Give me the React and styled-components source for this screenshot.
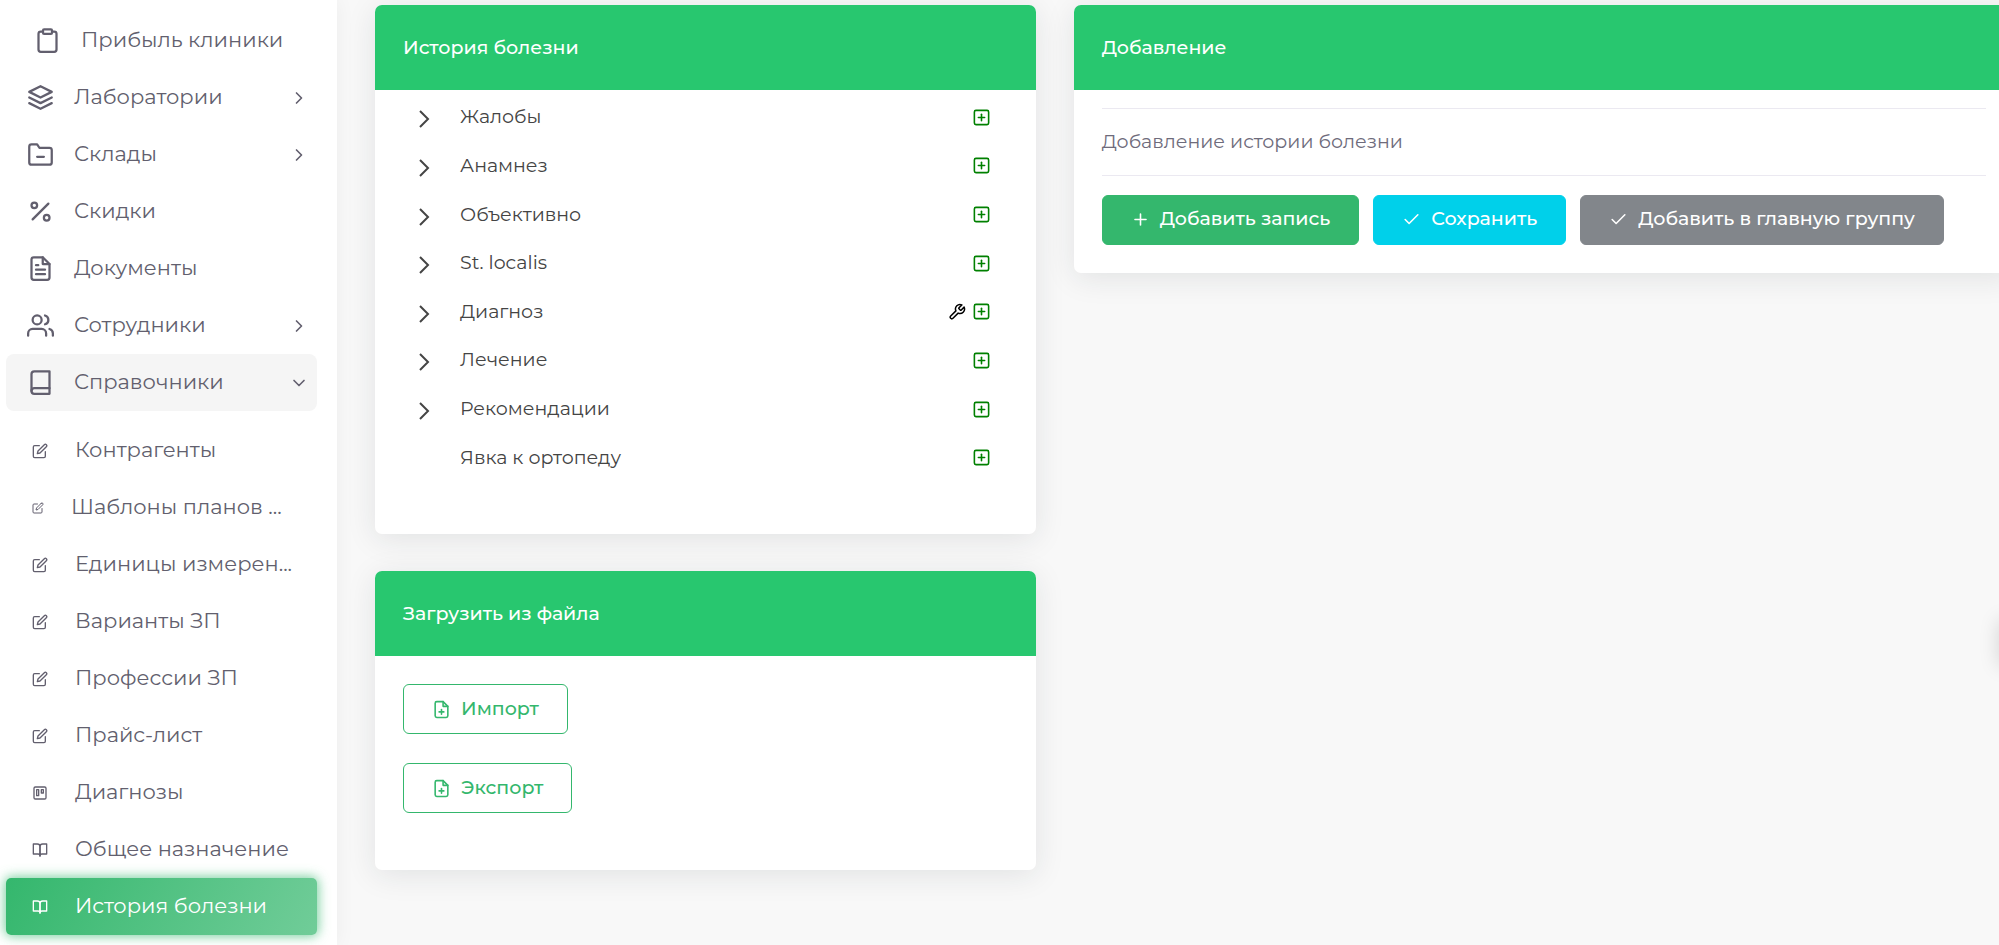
import React from 'react';
import styled, { createGlobalStyle, css } from 'styled-components';
import {
  FiBook,
  FiBookOpen,
  FiCheck,
  FiChevronDown,
  FiChevronRight,
  FiClipboard,
  FiEdit,
  FiFilePlus,
  FiFileText,
  FiFolderMinus,
  FiLayers,
  FiPercent,
  FiPlus,
  FiPlusSquare,
  FiTool,
  FiTrello,
  FiUsers,
} from 'react-icons/fi';

const menu = [
  { title: 'Прибыль клиники', icon: FiClipboard, nested: true },
  { title: 'Лаборатории', icon: FiLayers, arrow: FiChevronRight },
  { title: 'Склады', icon: FiFolderMinus, arrow: FiChevronRight },
  { title: 'Скидки', icon: FiPercent },
  { title: 'Документы', icon: FiFileText },
  { title: 'Сотрудники', icon: FiUsers, arrow: FiChevronRight },
  { title: 'Справочники', icon: FiBook, arrow: FiChevronDown, open: true },
];

const submenu = [
  { title: 'Контрагенты', icon: FiEdit },
  { title: 'Шаблоны планов ...', icon: FiEdit, small: true },
  { title: 'Единицы измерен...', icon: FiEdit },
  { title: 'Варианты ЗП', icon: FiEdit },
  { title: 'Профессии ЗП', icon: FiEdit },
  { title: 'Прайс-лист', icon: FiEdit },
  { title: 'Диагнозы', icon: FiTrello },
  { title: 'Общее назначение', icon: FiBookOpen },
  { title: 'История болезни', icon: FiBookOpen, active: true },
];

const sections = [
  { title: 'Жалобы', children: true },
  { title: 'Анамнез', children: true },
  { title: 'Объективно', children: true },
  { title: 'St. localis', children: true },
  { title: 'Диагноз', children: true, settings: true },
  { title: 'Лечение', children: true },
  { title: 'Рекомендации', children: true },
  { title: 'Явка к ортопеду' },
];

const TreeArrow = () => (
  <svg width="12" height="18" viewBox="0 0 12 18" fill="none" stroke="currentColor" strokeWidth="2">
    <polyline points="2,1 10,9 2,17" />
  </svg>
);

const Sidebar = () => (
  <SidebarStyled>
    <MenuList>
      {menu.map(({ title, icon: Icon, arrow: Arrow, nested, open }) => (
        <li key={title}>
          <MenuLink href="#" $open={open} $nested={nested}>
            <Icon size={27} />
            <MenuTitle>{title}</MenuTitle>
            {Arrow && <Arrow size={20} />}
          </MenuLink>
        </li>
      ))}
    </MenuList>
    <SubmenuList>
      {submenu.map(({ title, icon: Icon, small, active }) => (
        <li key={title}>
          <SubmenuLink href="#" $active={active}>
            <Icon size={small ? 12 : 16} />
            <MenuTitle>{title}</MenuTitle>
          </SubmenuLink>
        </li>
      ))}
    </SubmenuList>
  </SidebarStyled>
);

const App = () => {
  return (
    <Page>
      <GlobalStyle />
      <Sidebar />
      <Content>
        <Row>
          <Column $span={5}>
            <Card>
              <CardHeader>История болезни</CardHeader>
              <Tree>
                {sections.map((section) => (
                  <TreeRow key={section.title}>
                    <TreeToggle>
                      {section.children && (
                        <IconButton aria-label="Развернуть">
                          <TreeArrow />
                        </IconButton>
                      )}
                    </TreeToggle>
                    <TreeTitle>{section.title}</TreeTitle>
                    {section.settings && (
                      <IconButton $color="#000" aria-label="Настроить">
                        <FiTool size={18} />
                      </IconButton>
                    )}
                    <IconButton $color="#008000" aria-label="Добавить">
                      <FiPlusSquare size={19} />
                    </IconButton>
                  </TreeRow>
                ))}
              </Tree>
            </Card>
            <Card>
              <CardHeader>Загрузить из файла</CardHeader>
              <FileActions>
                <OutlineButton>
                  <FiFilePlus size={19} />
                  Импорт
                </OutlineButton>
                <OutlineButton>
                  <FiFilePlus size={19} />
                  Экспорт
                </OutlineButton>
              </FileActions>
            </Card>
          </Column>
          <Column $span={7}>
            <Card>
              <CardHeader>Добавление</CardHeader>
              <FormBody>
                <FormTitle>Добавление истории болезни</FormTitle>
                <Actions>
                  <Button $color="#34b76d">
                    <FiPlus size={19} />
                    Добавить запись
                  </Button>
                  <Button $color="#00d0ea">
                    <FiCheck size={19} />
                    Сохранить
                  </Button>
                  <Button $color="#82868b">
                    <FiCheck size={19} />
                    Добавить в главную группу
                  </Button>
                </Actions>
              </FormBody>
            </Card>
          </Column>
        </Row>
      </Content>
      <Customizer />
    </Page>
  );
};

export default App;

const GlobalStyle = createGlobalStyle`
  * {
    box-sizing: border-box;
  }

  body {
    margin: 0;
    background: #f8f8f8;
    color: #6e6b7b;
    font-family: Montserrat, Inter, 'Open Sans', sans-serif;
    font-size: 19px;
    line-height: 26px;
    overflow: hidden;
  }

  button {
    font: inherit;
    cursor: pointer;
  }
`;

const Page = styled.div`
  display: flex;
  min-height: 100vh;
  overflow: hidden;
`;

const SidebarStyled = styled.nav`
  flex: 0 0 337px;
  padding: 12px 20px 9px 6px;
  background: #fff;
  box-shadow: 0 0 19px rgba(0, 0, 0, 0.05);
`;

const MenuList = styled.ul`
  margin: 0;
  padding: 0;
  list-style: none;
`;

const SubmenuList = styled(MenuList)`
  margin-top: 11px;
`;

const linkStyles = css`
  display: flex;
  align-items: center;
  height: 57px;
  color: #625f6e;
  font-size: 21px;
  text-decoration: none;
  white-space: nowrap;

  svg {
    flex: none;
  }
`;

const MenuLink = styled.a`
  ${linkStyles}
  gap: 20px;
  padding: 0 8px 0 ${({ $nested }) => ($nested ? '28px' : '21px')};
  border-radius: 8px;
  background: ${({ $open }) => ($open ? '#f5f5f5' : 'transparent')};
`;

const SubmenuLink = styled.a`
  ${linkStyles}
  gap: 27px;
  padding: 0 8px 0 26px;
  border-radius: 5px;

  ${({ $active }) =>
    $active &&
    css`
      background: linear-gradient(118deg, #34b76d, rgba(52, 183, 109, 0.7));
      box-shadow: 0 0 12px 1px rgba(52, 183, 109, 0.7);
      color: #fff;
    `}
`;

const MenuTitle = styled.span`
  flex: 1;
  padding-bottom: 2px;
`;

const Content = styled.main`
  flex: 1;
  min-width: 0;
  margin-right: -34px;
  padding: 5px 0 0 19px;
`;

const Row = styled.div`
  display: flex;
  align-items: flex-start;
`;

const Column = styled.div`
  display: flex;
  flex-direction: column;
  gap: 37px;
  width: calc(100% * ${({ $span }) => $span} / 12);
  padding: 0 19px;
`;

const Card = styled.section`
  border-radius: 7px;
  background: #fff;
  box-shadow: 0 5px 30px rgba(34, 41, 47, 0.1);
`;

const CardHeader = styled.h4`
  display: flex;
  align-items: center;
  height: 85px;
  margin: 0;
  padding: 0 28px;
  border-radius: 7px 7px 0 0;
  background: #28c76f;
  color: #fff;
  font-size: 19px;
  font-weight: 500;
`;

const Tree = styled.ul`
  display: grid;
  grid-auto-rows: 1fr;
  height: 444px;
  margin: 0;
  padding: 3px 45px 52px 43px;
  color: #444;
  list-style: none;
`;

const TreeRow = styled.li`
  display: flex;
  align-items: center;
  gap: 6px;
`;

const TreeToggle = styled.span`
  width: 36px;
  padding-top: 4px;
`;

const TreeTitle = styled.span`
  flex: 1;
`;

const IconButton = styled.button`
  display: flex;
  padding: 0;
  border: 0;
  background: none;
  color: ${({ $color }) => $color || 'inherit'};
`;

const FileActions = styled.div`
  display: flex;
  flex-direction: column;
  align-items: flex-start;
  gap: 29px;
  padding: 28px 28px 57px;
`;

const FormBody = styled.div`
  padding: 18px 28px 28px;
`;

const FormTitle = styled.div`
  padding: 20px 0;
  border-top: 1px solid #ebe9f1;
  border-bottom: 1px solid #ebe9f1;
`;

const Actions = styled.div`
  display: flex;
  gap: 14px;
  margin-top: 19px;
`;

const Button = styled.button`
  display: flex;
  align-items: center;
  gap: 10px;
  height: 50px;
  padding: 0 28px 2px;
  border: 1px solid ${({ $color }) => $color};
  border-radius: 6px;
  background: ${({ $color }) => $color};
  color: #fff;
  font-weight: 500;
  white-space: nowrap;
`;

const OutlineButton = styled(Button)`
  padding-bottom: 0;
  border-color: #34b76d;
  background: transparent;
  color: #34b76d;
`;

/* settings drawer is closed, only its toggle's shadow reaches the page */
const Customizer = styled.div`
  position: fixed;
  top: 620px;
  left: 100%;
  width: 50px;
  height: 46px;
  box-shadow: 0 0 20px rgba(0, 0, 0, 0.15);
`;
